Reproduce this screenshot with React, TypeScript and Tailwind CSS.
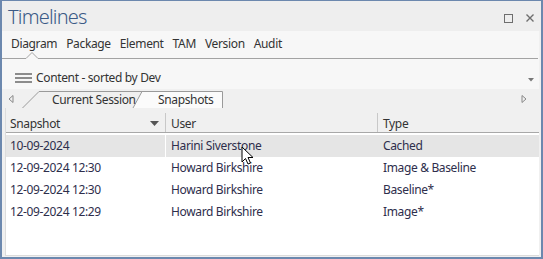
import React from 'react';

const tabs = ['Diagram', 'Package', 'Element', 'TAM', 'Version', 'Audit'];

const rows = [
  { snapshot: '10-09-2024', user: 'Harini Siverstone', type: 'Cached' },
  { snapshot: '12-09-2024 12:30', user: 'Howard Birkshire', type: 'Image & Baseline' },
  { snapshot: '12-09-2024 12:30', user: 'Howard Birkshire', type: 'Baseline*' },
  { snapshot: '12-09-2024 12:29', user: 'Howard Birkshire', type: 'Image*' },
];

function Cursor() {
  return (
    <svg className="absolute left-[239px] top-[145px]" width="14" height="20" viewBox="0 0 14 20">
      <path d="M1 1 L1 16 L4.5 12.5 L7 18 L9.5 17 L7 11.5 L12 11.5 Z" fill="#fff" stroke="#000" strokeWidth="1" strokeLinejoin="round" />
    </svg>
  );
}

export default function App() {
  return (
    <div
      className="relative w-[543px] h-[259px] bg-[#f0f0f0] border-[#6c88ae] border-t border-l-2 border-r-2 border-b-2 flex flex-col text-[12px] tracking-[-0.35px] overflow-hidden"
      style={{ fontFamily: '"Noto Sans", "Open Sans", sans-serif' }}
    >
      {/* title */}
      <div className="h-[30px] bg-[#eeeeee] flex items-center pl-[6px] pr-[7px]">
        <div className="text-[20px] font-light text-[#3b5a86] leading-none mt-[2px] tracking-[-0.8px]">Timelines</div>
        <div className="ml-auto flex items-center gap-[13px] mt-[4px]">
          <div className="w-[9px] h-[9px] border-[1.5px] border-[#6e6e6e]" />
          <svg width="8" height="8" viewBox="0 0 8 8">
            <path d="M0.5 0.5 L7.5 7.5 M7.5 0.5 L0.5 7.5" stroke="#6e6e6e" strokeWidth="1.4" />
          </svg>
        </div>
      </div>

      {/* tab links */}
      <div className="relative h-[28px] bg-[#f7f7f7] flex items-center gap-[9px] pl-[9px] pb-[3px] mr-[2px] text-[#333]">
        {tabs.map((t) => (
          <span key={t}>{t}</span>
        ))}
        <svg className="absolute left-0 bottom-0" width="536" height="8" viewBox="0 0 536 8">
          <path d="M0 7.5 L24 7.5 L30 1.5 L36 7.5 L536 7.5" fill="none" stroke="#a3a3a3" strokeWidth="1" />
        </svg>
      </div>

      {/* content selector */}
      <div className="h-[30px] bg-[#f7f7f7] flex items-center pl-[13px] pr-[5px] mr-[2px] pt-[7px] text-[#333]">
        <svg width="18" height="10" viewBox="0 0 18 10" className="mr-[3px]">
          <path d="M0 1 H17 M0 5 H17 M0 9 H17" stroke="#6a6a6a" strokeWidth="1.6" />
        </svg>
        <span>Content - sorted by Dev</span>
        <svg width="6" height="4" viewBox="0 0 6 4" className="ml-auto mt-[5px]">
          <path d="M0 0 H6 L3 3.5 Z" fill="#777" />
        </svg>
      </div>

      {/* tab strip */}
      <div className="relative h-[19px] text-[#333]">
        <svg className="absolute left-[6px] top-[6px]" width="6" height="8" viewBox="0 0 6 8">
          <path d="M5 0.5 L1 4 L5 7.5 Z" fill="none" stroke="#888" strokeWidth="1" />
        </svg>
        <svg className="absolute right-[14px] top-[6px]" width="6" height="8" viewBox="0 0 6 8">
          <path d="M1 0.5 L5 4 L1 7.5 Z" fill="none" stroke="#888" strokeWidth="1" />
        </svg>
        <svg className="absolute left-[20px] top-[2px]" width="203" height="17" viewBox="0 0 203 17">
          <path d="M0.5 17 L17 0.5 L120 0.5" fill="none" stroke="#9a9a9a" strokeWidth="1" />
          <path d="M111 17 L120 0.5 L200.5 0.5 L200.5 17" fill="#fbfbfb" stroke="#9a9a9a" strokeWidth="1" />
        </svg>
        <span className="absolute left-[50px] top-[2px]">Current Session</span>
        <span className="absolute left-[156px] top-[2px]">Snapshots</span>
      </div>

      {/* list */}
      <div className="flex-1 flex flex-col ml-[3px] mr-[2px] mb-[1px] border-l border-b border-[#dcdcdc] bg-white">
        <div className="h-[25px] flex bg-[#f0f0f0] border-b border-[#a8a8a8] text-[#333]">
          <div className="w-[160px] flex items-center pl-[4px] pr-[6px] pt-[2px] border-r border-[#c8c8c8] mt-[5px]">
            <span>Snapshot</span>
            <svg width="9" height="5" viewBox="0 0 9 5" className="ml-auto">
              <path d="M0 0 H9 L4.5 5 Z" fill="#555" />
            </svg>
          </div>
          <div className="w-[212px] flex items-center pl-[5px] pt-[2px] border-r border-[#c8c8c8] mt-[5px]">User</div>
          <div className="flex-1 flex items-center pl-[5px] pt-[7px]">Type</div>
        </div>
        <div className="pt-[2px]">
          {rows.map((r, i) => (
            <div
              key={i}
              className={`h-[22px] flex items-center text-[#2e2e4c] ${i === 0 ? 'bg-[#e5e5e5]' : ''}`}
            >
              <div className="w-[160px] pl-[4px] h-full flex items-center border-r border-white">{r.snapshot}</div>
              <div className="w-[212px] pl-[5px] h-full flex items-center">{r.user}</div>
              <div className="flex-1 pl-[5px] h-full flex items-center">{r.type}</div>
            </div>
          ))}
        </div>
      </div>
      <Cursor />
    </div>
  );
}
